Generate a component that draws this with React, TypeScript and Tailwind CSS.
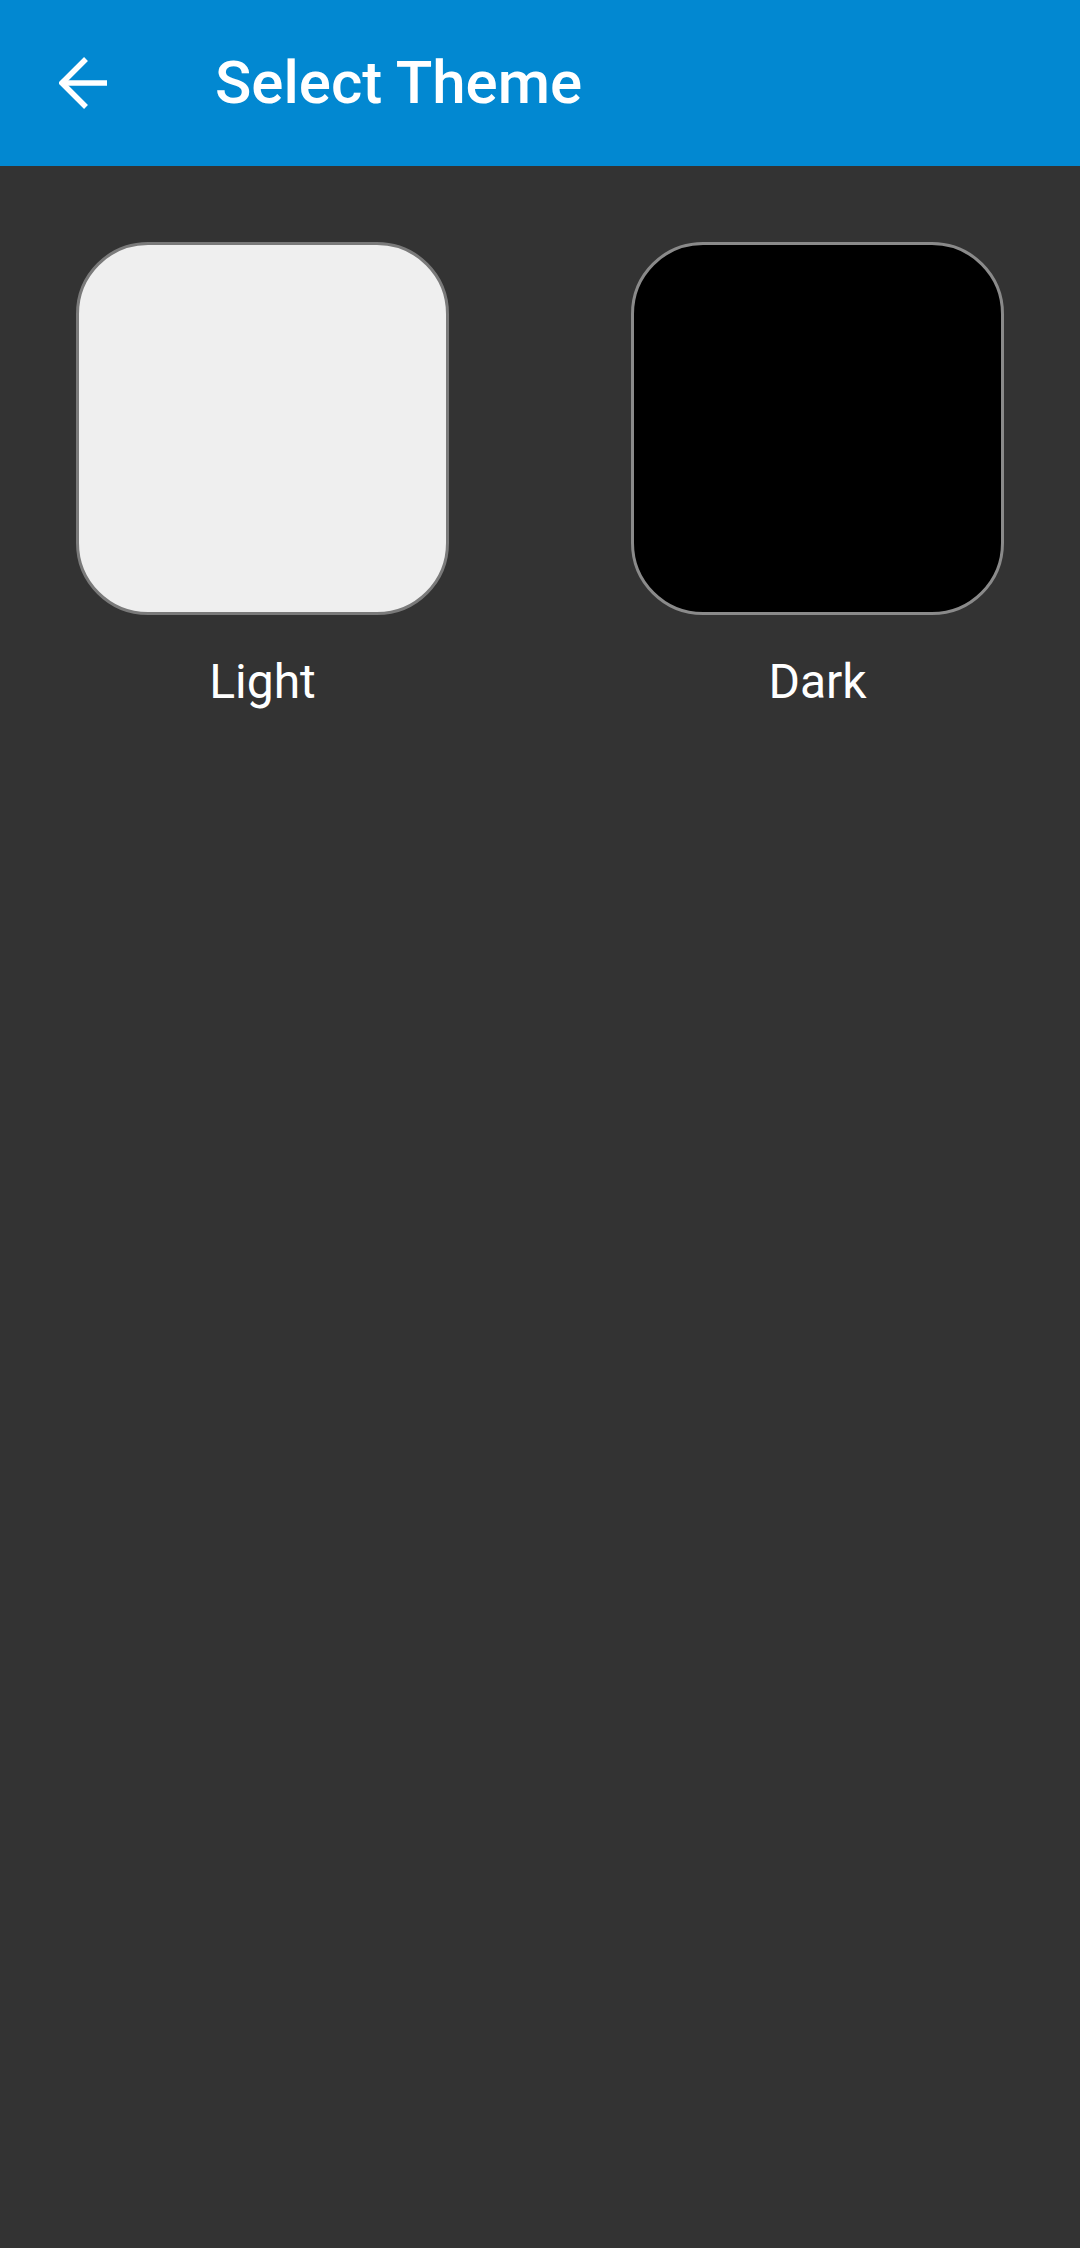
import React from 'react';

const themes = [
  { name: 'Light', swatch: 'bg-[#efefef] border-[#7a7a7a]' },
  { name: 'Dark', swatch: 'bg-black border-[#8a8a8a]' },
];

const BackArrow = () => (
  <svg width="48" height="52" viewBox="0 0 48 52" fill="none" stroke="white" strokeWidth="5.5">
    <polyline points="27,2 3,26 27,50" />
    <line x1="3" y1="26" x2="48" y2="26" />
  </svg>
);

export default function App() {
  return (
    <div className="min-h-[2248px] w-[1080px] bg-[#333333] font-['Roboto','Liberation_Sans',sans-serif]">
      <div className="h-[166px] bg-[#0288d1] flex items-center pl-[59px]">
        <button className="flex items-center">
          <BackArrow />
        </button>
        <h1 className="ml-[108px] text-white text-[60px] font-medium leading-none">Select Theme</h1>
      </div>
      <div className="flex gap-[182px] px-[76px] pt-[76px]">
        {themes.map(t => (
          <div key={t.name} className="flex flex-col items-center w-[373px]">
            <div className={`w-[373px] h-[373px] rounded-[72px] border-[3px] ${t.swatch}`} />
            <span className="mt-[39px] text-white text-[48px] leading-[56px]">{t.name}</span>
          </div>
        ))}
      </div>
    </div>
  );
}
